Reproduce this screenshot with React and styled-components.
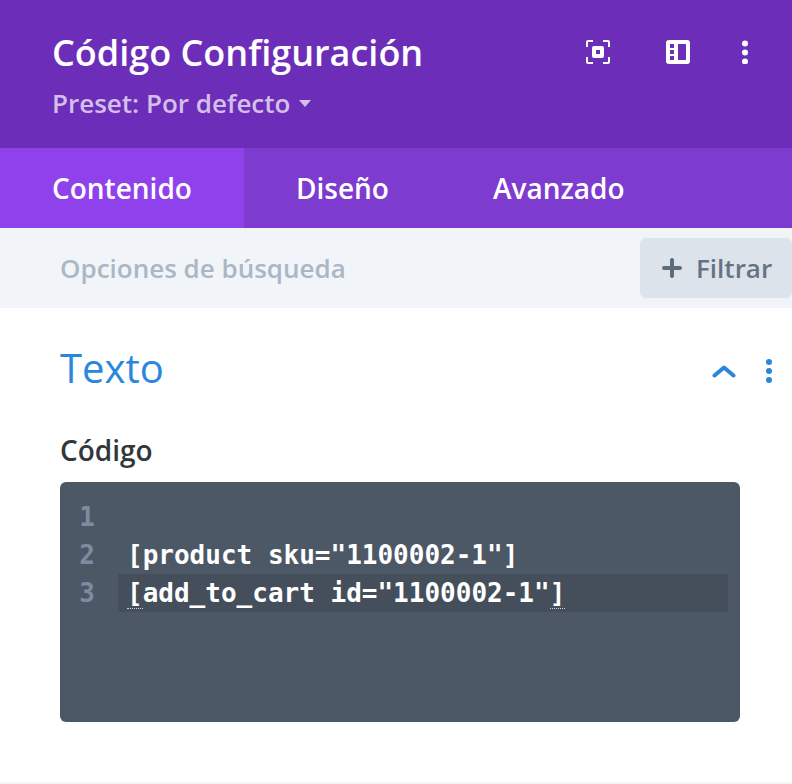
import React from 'react';
import styled, { createGlobalStyle } from 'styled-components';

const GlobalStyle = createGlobalStyle`
  html, body {
    margin: 0;
    padding: 0;
    background: #fff;
    font-family: 'Open Sans', sans-serif;
  }
  * {
    box-sizing: border-box;
  }
`;

const codeLines = [
  { number: 1, text: '' },
  { number: 2, text: '[product sku="1100002-1"]' },
  { number: 3, text: 'add_to_cart id="1100002-1"', active: true },
];

const App = () => (
  <Panel>
    <GlobalStyle />
    <Header>
      <HeaderText>
        <Title>Código Configuración</Title>
        <Preset>
          Preset: Por defecto
          <Caret />
        </Preset>
      </HeaderText>
      <HeaderIcons>
        <svg width="24" height="24" viewBox="0 0 24 24" fill="#fff">
          <path d="M0 2a2 2 0 0 1 2-2h5v2H2v5H0zM17 0h5a2 2 0 0 1 2 2v5h-2V2h-5zM0 17h2v5h5v2H2a2 2 0 0 1-2-2zM22 17h2v5a2 2 0 0 1-2 2h-5v-2h5z" />
          <path fillRule="evenodd" d="M8 6h8a2 2 0 0 1 2 2v8a2 2 0 0 1-2 2H8a2 2 0 0 1-2-2V8a2 2 0 0 1 2-2zM10 10v4h4v-4z" />
        </svg>
        <svg width="24" height="24" viewBox="0 0 24 24" fill="#fff">
          <path
            fillRule="evenodd"
            d="M3 0h18a3 3 0 0 1 3 3v18a3 3 0 0 1-3 3H3a3 3 0 0 1-3-3V3a3 3 0 0 1 3-3zM4 4v4h4V4zM4 10v4h4v-4zM4 16v4h4v-4zM12 4v16h8V4z"
          />
        </svg>
        <svg width="24" height="24" viewBox="0 0 24 24" fill="#fff">
          <circle cx="12" cy="3.5" r="3" />
          <circle cx="12" cy="12.5" r="3" />
          <circle cx="12" cy="21.5" r="3" />
        </svg>
      </HeaderIcons>
    </Header>
    <Tabs>
      <Tab $active>Contenido</Tab>
      <Tab>Diseño</Tab>
      <Tab>Avanzado</Tab>
    </Tabs>
    <SearchBar>
      <SearchLabel>Opciones de búsqueda</SearchLabel>
      <FilterButton>
        <svg width="20" height="20" viewBox="0 0 20 20" fill="none" stroke="#5f6c7b" strokeWidth="4" strokeLinecap="round">
          <path d="M10 2v16M2 10h16" />
        </svg>
        Filtrar
      </FilterButton>
    </SearchBar>
    <Content>
      <SectionHead>
        <SectionTitle>Texto</SectionTitle>
        <SectionIcons>
          <svg width="24" height="14" viewBox="0 0 24 14" fill="none" stroke="#2b87da" strokeWidth="4" strokeLinecap="round" strokeLinejoin="round">
            <path d="M2.5 11.5L12 3.5l9.5 8" />
          </svg>
          <svg width="6" height="24" viewBox="0 0 6 24" fill="#2b87da">
            <circle cx="3" cy="3" r="3" />
            <circle cx="3" cy="12" r="3" />
            <circle cx="3" cy="21" r="3" />
          </svg>
        </SectionIcons>
      </SectionHead>
      <FieldLabel>Código</FieldLabel>
      <Editor>
        {codeLines.map(line => (
          <CodeRow key={line.number}>
            <Gutter>{line.number}</Gutter>
            <CodeText $active={line.active}>
              {line.active ? (
                <>
                  <Match>[</Match>
                  {line.text}
                  <Match>]</Match>
                </>
              ) : (
                line.text
              )}
            </CodeText>
          </CodeRow>
        ))}
      </Editor>
    </Content>
    <Footer />
  </Panel>
);

const Panel = styled.div`
  width: 792px;
  height: 784px;
  display: flex;
  flex-direction: column;
  overflow: hidden;
  background: #fff;
`;

const Header = styled.header`
  height: 148px;
  flex: none;
  display: flex;
  justify-content: space-between;
  background: #6c2eb9;
  padding: 30px 35px 0 52px;
`;

const HeaderText = styled.div`
  display: flex;
  flex-direction: column;
`;

const Title = styled.h1`
  margin: 0;
  font-size: 36px;
  line-height: 46px;
  font-weight: 600;
  color: #fff;
`;

const Preset = styled.div`
  display: flex;
  align-items: center;
  margin-top: 11px;
  font-size: 26px;
  line-height: 32px;
  font-weight: 600;
  color: #d3bfeb;
`;

const Caret = styled.span`
  width: 0;
  height: 0;
  margin-left: 9px;
  border-left: 6px solid transparent;
  border-right: 6px solid transparent;
  border-top: 7px solid #d5c0ed;
`;

const HeaderIcons = styled.div`
  display: grid;
  grid-template-columns: 80px 67px 24px;
  align-self: flex-start;
  padding-top: 10px;
`;

const Tabs = styled.nav`
  height: 80px;
  flex: none;
  display: flex;
  background: #7e3bd0;
`;

const Tab = styled.div`
  display: flex;
  align-items: center;
  padding: 0 52px;
  font-size: 28px;
  font-weight: 600;
  color: #fff;
  background: ${({ $active }) => ($active ? '#8f42ec' : 'transparent')};
`;

const SearchBar = styled.div`
  height: 80px;
  flex: none;
  display: flex;
  justify-content: space-between;
  padding: 10px 0 10px 60px;
  background: #f1f5f9;
`;

const SearchLabel = styled.div`
  align-self: center;
  font-size: 26px;
  font-weight: 600;
  color: #abb7c5;
`;

const FilterButton = styled.div`
  width: 152px;
  display: flex;
  align-items: center;
  gap: 14px;
  padding-left: 22px;
  border-radius: 6px;
  background: #dde3ea;
  font-size: 26px;
  font-weight: 600;
  color: #667383;
`;

const Content = styled.main`
  flex: 1;
  padding: 34px 20px 0 60px;
`;

const SectionHead = styled.div`
  display: flex;
  align-items: center;
  justify-content: space-between;
`;

const SectionTitle = styled.h2`
  margin: 0;
  font-size: 40px;
  line-height: 52px;
  font-weight: 400;
  color: #2b87da;
`;

const SectionIcons = styled.div`
  display: flex;
  align-items: center;
  gap: 30px;
  margin-top: 6px;
`;

const FieldLabel = styled.div`
  margin-top: 38px;
  font-size: 28px;
  line-height: 36px;
  font-weight: 600;
  color: #32373c;
`;

const Editor = styled.div`
  width: 680px;
  height: 240px;
  margin-top: 14px;
  padding: 16px 12px 0 0;
  border-radius: 6px;
  background: #4c5866;
  font-family: 'DejaVu Sans Mono', monospace;
  font-size: 26px;
  font-weight: 700;
`;

const CodeRow = styled.div`
  display: flex;
  height: 38px;
  line-height: 38px;
`;

const Gutter = styled.div`
  width: 58px;
  padding-right: 23px;
  flex: none;
  text-align: right;
  color: #7e8ba0;
`;

const CodeText = styled.div`
  flex: 1;
  padding-left: 9px;
  white-space: pre;
  color: #fff;
  background: ${({ $active }) => ($active ? '#444f5b' : 'transparent')};
`;

const Match = styled.span`
  border-bottom: 1px dotted #cfd6dd;
`;

const Footer = styled.div`
  height: 2px;
  flex: none;
  background: #f1f5f9;
`;

export default App;
